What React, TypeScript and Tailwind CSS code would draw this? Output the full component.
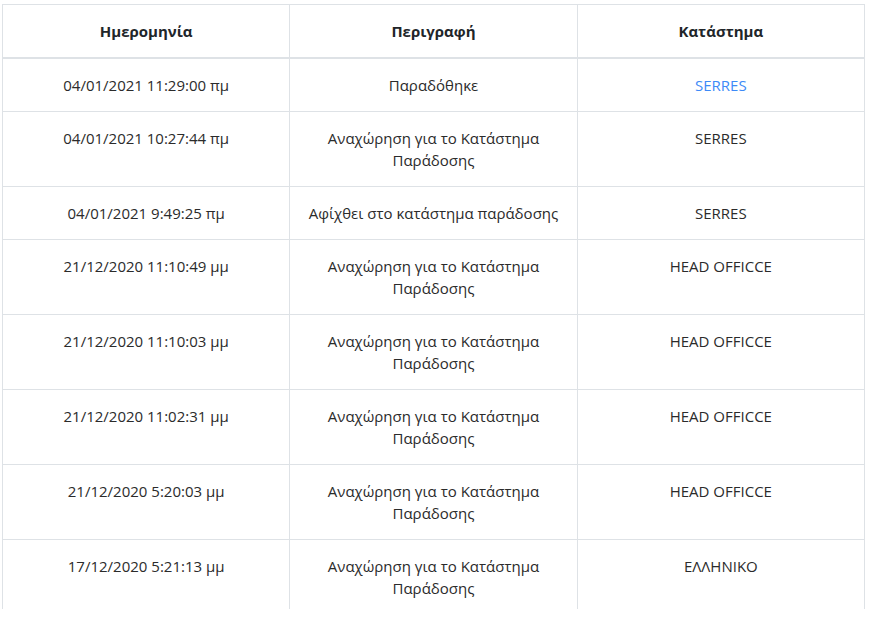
import React from "react";

const rows: { date: string; desc: string[]; store: string; link?: boolean }[] = [
  { date: "04/01/2021 11:29:00 πμ", desc: ["Παραδόθηκε"], store: "SERRES", link: true },
  { date: "04/01/2021 10:27:44 πμ", desc: ["Αναχώρηση για το Κατάστημα", "Παράδοσης"], store: "SERRES" },
  { date: "04/01/2021 9:49:25 πμ", desc: ["Αφίχθει στο κατάστημα παράδοσης"], store: "SERRES" },
  { date: "21/12/2020 11:10:49 μμ", desc: ["Αναχώρηση για το Κατάστημα", "Παράδοσης"], store: "HEAD OFFICCE" },
  { date: "21/12/2020 11:10:03 μμ", desc: ["Αναχώρηση για το Κατάστημα", "Παράδοσης"], store: "HEAD OFFICCE" },
  { date: "21/12/2020 11:02:31 μμ", desc: ["Αναχώρηση για το Κατάστημα", "Παράδοσης"], store: "HEAD OFFICCE" },
  { date: "21/12/2020 5:20:03 μμ", desc: ["Αναχώρηση για το Κατάστημα", "Παράδοσης"], store: "HEAD OFFICCE" },
  { date: "17/12/2020 5:21:13 μμ", desc: ["Αναχώρηση για το Κατάστημα", "Παράδοσης"], store: "ΕΛΛΗΝΙΚΟ" },
];

export default function App() {
  return (
    <div
      className="bg-white w-[873px] h-[618px] pt-[4px] pl-[2px] text-[15px] leading-[22px] text-[#2b2b2b]"
      style={{ fontFamily: '"Open Sans", "Noto Sans", sans-serif' }}
    >
      <div className="w-[863px] h-[605px] overflow-hidden">
        <table className="w-full table-fixed border-collapse">
          <thead>
            <tr>
              <th className="border border-[#dee2e6] border-b-2 px-3 py-[15px] font-bold text-center text-[#212529]">Ημερομηνία</th>
              <th className="border border-[#dee2e6] border-b-2 px-3 py-[15px] font-bold text-center text-[#212529]">Περιγραφή</th>
              <th className="border border-[#dee2e6] border-b-2 px-3 py-[15px] font-bold text-center text-[#212529]">Κατάστημα</th>
            </tr>
          </thead>
          <tbody>
            {rows.map((r, i) => (
              <tr key={i}>
                <td className="border border-[#dee2e6] px-3 py-[15px] text-center align-top">{r.date}</td>
                <td className="border border-[#dee2e6] px-3 py-[15px] text-center align-top">
                  {r.desc.map((d, j) => (
                    <div key={j}>{d}</div>
                  ))}
                </td>
                <td className={"border border-[#dee2e6] px-3 py-[15px] text-center align-top " + (r.link ? "text-[#3d8af7]" : "")}>
                  {r.store}
                </td>
              </tr>
            ))}
          </tbody>
        </table>
      </div>
    </div>
  );
}
